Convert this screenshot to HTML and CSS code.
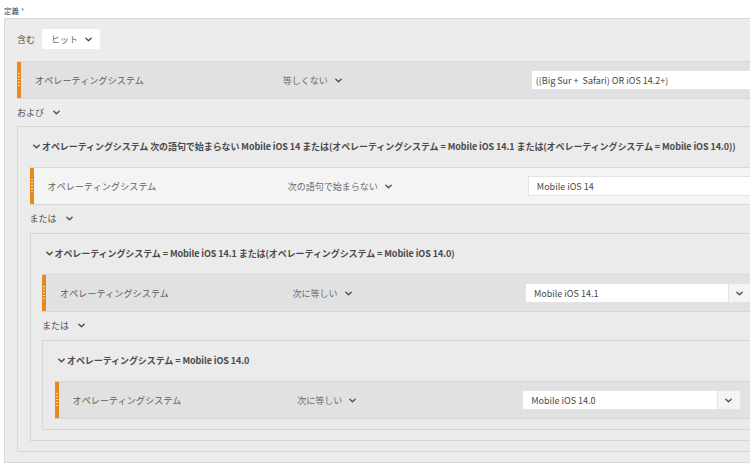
FILE: index.html
```html
<!DOCTYPE html>
<html lang="ja">
<head>
<meta charset="utf-8">
<title>定義</title>
<link rel="stylesheet" href="styles.css">
</head>
<body>
<div class="top-label">定義 <span class="req">*</span></div>
<div class="def">
  <div class="include-bar">
    <span class="lbl">含む</span>
    <span class="pill">ヒット<svg class="chev" viewBox="0 0 8 5"><path d="M1 1l3 3 3-3"/></svg></span>
  </div>

  <div class="rule">
    <div class="handle"></div>
    <div class="fields">
      <span class="dim">オペレーティングシステム</span>
      <span class="op">等しくない<svg class="chev" viewBox="0 0 8 5"><path d="M1 1l3 3 3-3"/></svg></span>
      <div class="field narrow">((Big Sur +&nbsp; Safari) OR iOS 14.2+)</div>
    </div>
  </div>

  <div class="conj">および<svg class="chev" viewBox="0 0 8 5"><path d="M1 1l3 3 3-3"/></svg></div>

  <div class="group">
    <div class="group-head"><svg class="chev head-chev" viewBox="0 0 8 5"><path d="M1 1l3 3 3-3"/></svg>オペレーティングシステム 次の語句で始まらない Mobile iOS 14 または(オペレーティングシステム = Mobile iOS 14.1 または(オペレーティングシステム = Mobile iOS 14.0))</div>
    <div class="rule light">
      <div class="handle"></div>
      <div class="fields">
        <span class="dim">オペレーティングシステム</span>
        <span class="op">次の語句で始まらない<svg class="chev" viewBox="0 0 8 5"><path d="M1 1l3 3 3-3"/></svg></span>
        <div class="field">Mobile iOS 14</div>
      </div>
    </div>

    <div class="conj">または<svg class="chev" viewBox="0 0 8 5"><path d="M1 1l3 3 3-3"/></svg></div>

    <div class="group">
      <div class="group-head"><svg class="chev head-chev" viewBox="0 0 8 5"><path d="M1 1l3 3 3-3"/></svg>オペレーティングシステム = Mobile iOS 14.1 または(オペレーティングシステム = Mobile iOS 14.0)</div>
      <div class="rule">
        <div class="handle"></div>
        <div class="fields">
          <span class="dim">オペレーティングシステム</span>
          <span class="op">次に等しい<svg class="chev" viewBox="0 0 8 5"><path d="M1 1l3 3 3-3"/></svg></span>
          <div class="combo">
            <div class="field">Mobile iOS 14.1</div>
            <span class="combo-btn"><svg class="chev" viewBox="0 0 8 5"><path d="M1 1l3 3 3-3"/></svg></span>
          </div>
        </div>
      </div>

      <div class="conj">または<svg class="chev" viewBox="0 0 8 5"><path d="M1 1l3 3 3-3"/></svg></div>

      <div class="group">
        <div class="group-head"><svg class="chev head-chev" viewBox="0 0 8 5"><path d="M1 1l3 3 3-3"/></svg>オペレーティングシステム = Mobile iOS 14.0</div>
        <div class="rule">
          <div class="handle"></div>
          <div class="fields">
            <span class="dim">オペレーティングシステム</span>
            <span class="op">次に等しい<svg class="chev" viewBox="0 0 8 5"><path d="M1 1l3 3 3-3"/></svg></span>
            <div class="combo">
              <div class="field">Mobile iOS 14.0</div>
              <span class="combo-btn"><svg class="chev" viewBox="0 0 8 5"><path d="M1 1l3 3 3-3"/></svg></span>
            </div>
          </div>
        </div>
      </div>
    </div>
  </div>
</div>
</body>
</html>
```

FILE: styles.css
```css
html {
  overflow: hidden;
}
body {
  margin: 0;
  background: #ffffff;
  font-family: "Noto Sans CJK JP", "Noto Sans", sans-serif;
  font-size: 9px;
  color: #555555;
  overflow: hidden;
}
.top-label {
  padding: 4px 0 0 4px;
  height: 14px;
  line-height: 14px;
  font-size: 7.5px;
  color: #4b4b4b;
}
.req {
  color: #6a6a6a;
}
.def {
  margin-left: 4px;
  width: 799.5px;
  box-sizing: border-box;
  border: 1px solid #d9d9d9;
  background: #ececec;
  padding: 10px 12px 10px 12px;
}
.include-bar {
  display: flex;
  align-items: center;
  height: 20px;
  gap: 7px;
}
.lbl {
  color: #4e4e4e;
}
.pill {
  display: inline-flex;
  align-items: center;
  gap: 7px;
  height: 20px;
  padding: 0 8px 0 9px;
  background: #ffffff;
  border-radius: 2px;
  color: #6a6a6a;
}
.chev {
  width: 7px;
  height: 5px;
  flex: none;
  fill: none;
  stroke: #505050;
  stroke-width: 1.6;
  stroke-linecap: round;
  stroke-linejoin: round;
}
.rule {
  display: flex;
  height: 38px;
  box-sizing: border-box;
  margin-top: 12px;
  background: #e1e1e1;
  border-top: 1px solid #d7d7d7;
  border-bottom: 1px solid #d7d7d7;
}
.group .rule {
  margin-top: 0;
}
.rule.light {
  background: #f4f4f4;
}
.handle {
  width: 4px;
  flex: none;
  background: #e8891c;
  display: flex;
  align-items: center;
  justify-content: center;
}
.handle::before {
  content: "";
  width: 2px;
  height: 14px;
  background: repeating-linear-gradient(to bottom, rgba(255, 255, 255, 0.65) 0 1px, transparent 1px 3px);
}
.fields {
  flex: 1;
  min-width: 0;
  display: grid;
  grid-template-columns: repeat(3, minmax(0, 1fr));
  column-gap: 6px;
  align-items: center;
  padding: 0 18px 0 14px;
}
.dim {
  color: #5c5c5c;
  letter-spacing: 0.15px;
  white-space: nowrap;
}
.op {
  display: inline-flex;
  align-items: center;
  gap: 7px;
  color: #6b6b6b;
  white-space: nowrap;
}
.field {
  height: 20px;
  box-sizing: border-box;
  background: #ffffff;
  border: 1px solid #e3e3e3;
  display: flex;
  align-items: center;
  padding-left: 8px;
  color: #474747;
  white-space: nowrap;
  overflow: hidden;
}
.field.narrow {
  padding-left: 4px;
}
.combo {
  display: flex;
  min-width: 0;
}
.combo .field {
  flex: 1;
  min-width: 0;
}
.combo-btn {
  width: 23px;
  height: 20px;
  flex: none;
  box-sizing: border-box;
  background: #f4f4f4;
  border: 1px solid #e3e3e3;
  border-left: none;
  display: flex;
  align-items: center;
  justify-content: center;
}
.conj {
  display: flex;
  align-items: center;
  gap: 9px;
  height: 14px;
  margin: 6px 0 7px 0;
  color: #555555;
}
.group .conj {
  margin-bottom: 8px;
}
.group {
  border: 1px solid #d6d6d6;
  background: #ebebeb;
  padding: 12px 9.5px 10px 11.5px;
}
.group-head {
  display: flex;
  align-items: center;
  gap: 2px;
  height: 14px;
  margin: 0 0 14px 3.5px;
  font-weight: 700;
  color: #4a4a4a;
  letter-spacing: -0.08px;
  white-space: nowrap;
}
.head-chev {
  stroke-width: 1.8;
}
```
